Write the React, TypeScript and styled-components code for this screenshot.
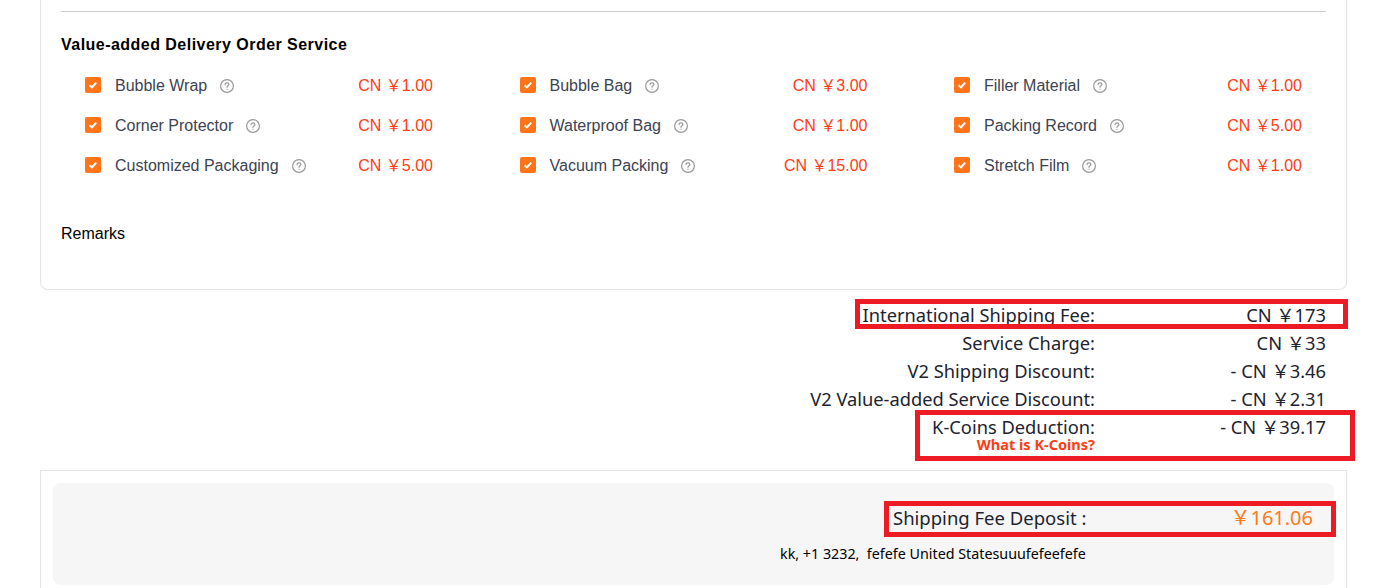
import React from 'react';
import styled, { createGlobalStyle } from 'styled-components';

interface Service {
  name: string;
  price: string;
}

const services: Service[] = [
  { name: 'Bubble Wrap', price: '1.00' },
  { name: 'Bubble Bag', price: '3.00' },
  { name: 'Filler Material', price: '1.00' },
  { name: 'Corner Protector', price: '1.00' },
  { name: 'Waterproof Bag', price: '1.00' },
  { name: 'Packing Record', price: '5.00' },
  { name: 'Customized Packaging', price: '5.00' },
  { name: 'Vacuum Packing', price: '15.00' },
  { name: 'Stretch Film', price: '1.00' },
];

const HelpIcon = () => (
  <HelpSvg viewBox="0 0 14 14" fill="none" stroke="#999" strokeWidth="1.2">
    <circle cx="7" cy="7" r="6.4" />
    <path d="M5.1 5.6c0-1.1.8-1.8 1.9-1.8s1.9.7 1.9 1.6c0 1.4-1.9 1.4-1.9 2.9" strokeLinecap="round" />
    <circle cx="7" cy="10.2" r=".6" fill="#999" stroke="none" />
  </HelpSvg>
);

const CheckIcon = () => (
  <svg width="16" height="16" viewBox="0 0 16 16" fill="none">
    <path d="M4.6 8.2l2.4 2.2 4.2-4.8" stroke="#fff" strokeWidth="2" />
  </svg>
);

export default function App() {
  return (
    <>
      <GlobalStyle />
      <Page>
        <OptionsCard>
          <Divider />
          <SectionTitle>Value-added Delivery Order Service</SectionTitle>
          <ServiceGrid>
            {services.map(service => (
              <ServiceItem key={service.name}>
                <CheckBox><CheckIcon /></CheckBox>
                <ServiceName>{service.name}</ServiceName>
                <HelpIcon />
                <ServicePrice>CN ￥{service.price}</ServicePrice>
              </ServiceItem>
            ))}
          </ServiceGrid>
          <Remarks>Remarks</Remarks>
        </OptionsCard>

        <Summary>
          <FeeRow>
            <FeeLabel>International Shipping Fee:</FeeLabel>
            <FeeValue>CN ￥173</FeeValue>
            <ShippingMark />
          </FeeRow>
          <FeeRow>
            <FeeLabel>Service Charge:</FeeLabel>
            <FeeValue>CN ￥33</FeeValue>
          </FeeRow>
          <FeeRow>
            <FeeLabel>V2 Shipping Discount:</FeeLabel>
            <FeeValue>- CN ￥3.46</FeeValue>
          </FeeRow>
          <FeeRow>
            <FeeLabel>V2 Value-added Service Discount:</FeeLabel>
            <FeeValue>- CN ￥2.31</FeeValue>
          </FeeRow>
          <FeeRow>
            <FeeLabel>
              <CoinsTitle>K-Coins Deduction:</CoinsTitle>
              <CoinsLink>What is K-Coins?</CoinsLink>
            </FeeLabel>
            <FeeValue>- CN ￥39.17</FeeValue>
            <CoinsMark />
          </FeeRow>
        </Summary>

        <DepositCard>
          <DepositPanel>
            <DepositRow>
              <DepositLabel>Shipping Fee Deposit :</DepositLabel>
              <DepositValue>￥161.06</DepositValue>
              <DepositMark />
            </DepositRow>
            <Address>kk, +1 3232,&nbsp; fefefe United Statesuuufefeefefe</Address>
          </DepositPanel>
        </DepositCard>
      </Page>
    </>
  );
}

const GlobalStyle = createGlobalStyle`
  html, body {
    margin: 0;
    height: 588px;
    overflow: hidden;
    background: #fff;
  }
`;

const Page = styled.div`
  padding: 0 31px 0 40px;
  height: 588px;
  overflow: hidden;
  color: #000;
  font-family: "Liberation Sans", "Noto Sans CJK SC", sans-serif;
`;

const OptionsCard = styled.section`
  box-sizing: border-box;
  height: 290px;
  padding: 11px 20px 0;
  border: 1px solid #e4e4e4;
  border-top: 0;
  border-radius: 0 0 8px 8px;
`;

const Divider = styled.div`
  height: 1px;
  background: #cfcfcf;
`;

const SectionTitle = styled.h3`
  margin: 23px 0 0;
  font-size: 16px;
  line-height: 20px;
  font-weight: 700;
  letter-spacing: 0.47px;
`;

const ServiceGrid = styled.div`
  display: grid;
  grid-template-columns: repeat(3, 348px);
  column-gap: 86.5px;
  margin-top: 10px;
  padding: 0 24px;
`;

const ServiceItem = styled.label`
  display: flex;
  align-items: center;
  height: 40px;
`;

const CheckBox = styled.span`
  display: flex;
  flex: none;
  width: 16px;
  height: 16px;
  border-radius: 2px;
  background: #ff7418;
`;

const ServiceName = styled.span`
  margin-left: 14px;
  padding-top: 2px;
  font-size: 16px;
  color: #3c4353;
`;

const HelpSvg = styled.svg`
  flex: none;
  width: 14px;
  height: 14px;
  margin-left: 13px;
  padding-top: 2px;
  box-sizing: content-box;
`;

const ServicePrice = styled.span`
  margin-left: auto;
  padding-bottom: 2px;
  font-size: 16px;
  color: #ff3c14;
  white-space: nowrap;
`;

const Remarks = styled.div`
  margin-top: 39px;
  font-size: 16px;
  line-height: 20px;
`;

const Summary = styled.div`
  padding-top: 11px;
`;

const FeeRow = styled.div`
  position: relative;
  display: grid;
  grid-template-columns: 1fr 231px;
  padding-right: 21px;
  font-family: "Noto Sans", "Noto Sans CJK SC", sans-serif;
  font-size: 18.3px;
  line-height: 28px;
  color: #1d2330;
`;

const FeeLabel = styled.div`
  text-align: right;
`;

const FeeValue = styled.div`
  text-align: right;
`;

const CoinsTitle = styled.div`
  padding-top: 5px;
  line-height: 18px;
`;

const CoinsLink = styled.div`
  padding-bottom: 2px;
  font-size: 14.5px;
  line-height: 16px;
  font-weight: 700;
  color: #ff3c14;
`;

const Mark = styled.span`
  position: absolute;
  box-sizing: border-box;
  border: 5px solid #ed1c24;
  pointer-events: none;
`;

const ShippingMark = styled(Mark)`
  top: -2px;
  left: 815px;
  width: 493px;
  height: 30px;
`;

const CoinsMark = styled(Mark)`
  top: -3px;
  left: 875px;
  width: 440px;
  height: 51px;
`;

const DepositCard = styled.section`
  box-sizing: border-box;
  margin-top: 16px;
  height: 130px;
  padding: 12px 12px 0;
  border: 1px solid #e4e4e4;
`;

const DepositPanel = styled.div`
  height: 102px;
  padding-top: 18px;
  box-sizing: border-box;
  border-radius: 8px;
  background: #f6f6f6;
`;

const DepositRow = styled.div`
  position: relative;
  display: flex;
  align-items: center;
  justify-content: space-between;
  width: 420px;
  height: 36px;
  margin-left: auto;
  margin-right: 21px;
  font-family: "Noto Sans", "Noto Sans CJK SC", sans-serif;
`;

const DepositLabel = styled.span`
  padding-bottom: 4px;
  font-size: 18.5px;
  color: #1d2330;
`;

const DepositValue = styled.span`
  padding-bottom: 6px;
  font-size: 20px;
  color: #ff7a1a;
`;

const DepositMark = styled(Mark)`
  top: 0;
  left: -9px;
  width: 452px;
  height: 36px;
`;

const Address = styled.div`
  margin-top: 7px;
  padding-left: 727px;
  font-family: "Noto Sans", sans-serif;
  font-size: 14.3px;
  line-height: 20px;
  white-space: nowrap;
`;
